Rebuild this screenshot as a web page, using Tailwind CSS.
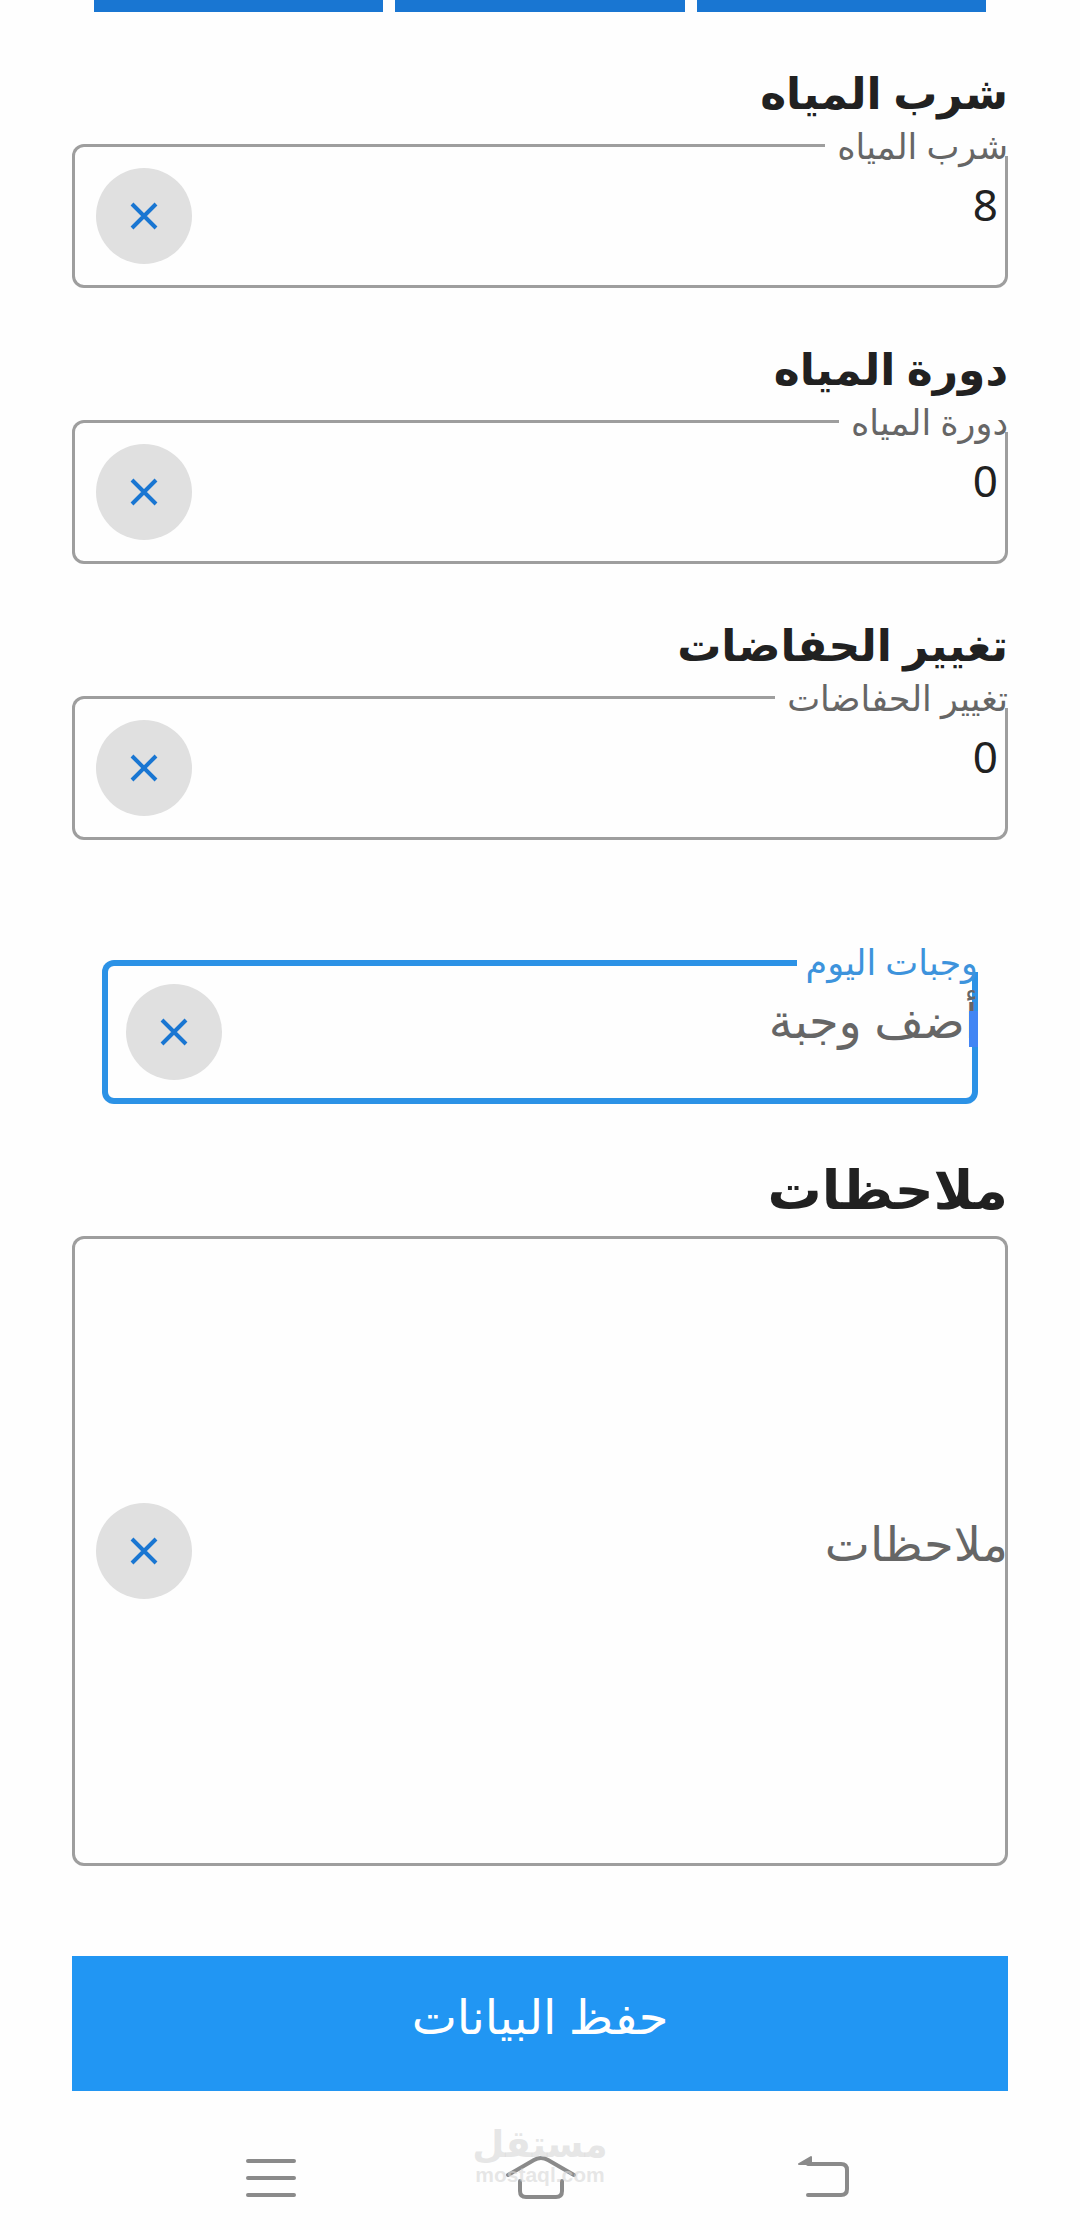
<!DOCTYPE html>
<html lang="ar" dir="rtl">
<head>
    <meta charset="UTF-8">
    <meta name="viewport" content="width=device-width, initial-scale=1.0">
    <title>البيانات اليومية</title>
    <script src="https://cdn.jsdelivr.net/npm/@tailwindcss/browser@4"></script>
</head>
<body class="bg-[#fefefe] text-[#212121] font-['Noto_Sans','DejaVu_Sans',sans-serif]">

    <div class="grid grid-cols-3 gap-3 px-[94px]">
        <div class="h-3 bg-[#1976d2]"></div>
        <div class="h-3 bg-[#1976d2]"></div>
        <div class="h-3 bg-[#1976d2]"></div>
    </div>

    <form id="daily-form" class="px-[72px]">
        <h2 class="pt-11 pb-4 text-[44px] leading-[72px] font-bold">شرب المياه</h2>
        <div class="relative flex h-36 items-center rounded-xl pl-6 pr-[10px] inset-ring-3 inset-ring-[#9e9e9e]">
            <label for="water" class="absolute right-0 -top-3 bg-[#fefefe] pl-3 pt-1 text-[35px] leading-5 text-[#666]">شرب المياه</label>
            <input id="water" type="text" value="8" class="min-w-0 flex-1 pb-6 text-[44px] leading-[60px] outline-none">
            <button type="button" aria-label="مسح" class="clear flex size-24 items-center justify-center rounded-full bg-[#e0e0e0]">
                <svg class="size-7" viewBox="0 0 28 28" fill="none" stroke="#1976d2" stroke-width="4"><path d="M2 2l24 24M26 2L2 26"/></svg>
            </button>
        </div>

        <h2 class="pt-11 pb-4 text-[44px] leading-[72px] font-bold">دورة المياه</h2>
        <div class="relative flex h-36 items-center rounded-xl pl-6 pr-[10px] inset-ring-3 inset-ring-[#9e9e9e]">
            <label for="toilet" class="absolute right-0 -top-3 bg-[#fefefe] pl-3 pt-1 text-[35px] leading-5 text-[#666]">دورة المياه</label>
            <input id="toilet" type="text" value="0" class="min-w-0 flex-1 pb-6 text-[44px] leading-[60px] outline-none">
            <button type="button" aria-label="مسح" class="clear flex size-24 items-center justify-center rounded-full bg-[#e0e0e0]">
                <svg class="size-7" viewBox="0 0 28 28" fill="none" stroke="#1976d2" stroke-width="4"><path d="M2 2l24 24M26 2L2 26"/></svg>
            </button>
        </div>

        <h2 class="pt-11 pb-4 text-[44px] leading-[72px] font-bold">تغيير الحفاضات</h2>
        <div class="relative flex h-36 items-center rounded-xl pl-6 pr-[10px] inset-ring-3 inset-ring-[#9e9e9e]">
            <label for="diapers" class="absolute right-0 -top-3 bg-[#fefefe] pl-3 pt-1 text-[35px] leading-5 text-[#666]">تغيير الحفاضات</label>
            <input id="diapers" type="text" value="0" class="min-w-0 flex-1 pb-6 text-[44px] leading-[60px] outline-none">
            <button type="button" aria-label="مسح" class="clear flex size-24 items-center justify-center rounded-full bg-[#e0e0e0]">
                <svg class="size-7" viewBox="0 0 28 28" fill="none" stroke="#1976d2" stroke-width="4"><path d="M2 2l24 24M26 2L2 26"/></svg>
            </button>
        </div>

        <div class="relative mx-[30px] mt-[120px] flex h-36 items-center rounded-xl pl-6 inset-ring-6 inset-ring-[#2c92e6]">
            <label for="meals" class="absolute right-0 -top-3 bg-[#fefefe] pl-2 pt-1 text-[35px] leading-5 text-[#3d93dc]">وجبات اليوم</label>
            <input id="meals" type="text" placeholder="أضف وجبة" class="min-w-0 flex-1 pb-6 text-[48px] leading-[60px] outline-none placeholder:text-[#666]">
            <span class="absolute right-0 top-[51px] h-9 w-[9px] bg-[#4285f4]"></span>
            <button type="button" aria-label="مسح" class="clear flex size-24 items-center justify-center rounded-full bg-[#e0e0e0]">
                <svg class="size-7" viewBox="0 0 28 28" fill="none" stroke="#1976d2" stroke-width="4"><path d="M2 2l24 24M26 2L2 26"/></svg>
            </button>
        </div>

        <h2 class="pt-12 pb-3 text-[54px] leading-[72px] font-bold"><label for="notes">ملاحظات</label></h2>
        <div class="flex h-[630px] items-center rounded-xl pl-6 inset-ring-3 inset-ring-[#9e9e9e]">
            <textarea id="notes" rows="1" placeholder="ملاحظات" class="min-w-0 flex-1 resize-none overflow-hidden pb-4 text-[48px] leading-[60px] outline-none placeholder:text-[#666]"></textarea>
            <button type="button" aria-label="مسح" class="clear flex size-24 items-center justify-center rounded-full bg-[#e0e0e0]">
                <svg class="size-7" viewBox="0 0 28 28" fill="none" stroke="#1976d2" stroke-width="4"><path d="M2 2l24 24M26 2L2 26"/></svg>
            </button>
        </div>

        <button type="submit" class="mt-[90px] h-[135px] w-full bg-[#2196f3] pb-4 text-[48px] text-white">حفظ البيانات</button>
    </form>

    <nav class="relative grid h-[139px] grid-cols-3 items-center justify-items-center px-[126px] pt-[34px]">
        <button type="button" aria-label="رجوع">
            <svg class="h-12 w-[72px]" viewBox="0 0 72 48" fill="none" stroke="#8a8a8a" stroke-width="4" stroke-linecap="round"><path d="M28 10H61q6 0 6 6V35q0 6-6 6H28"/><path d="M19 10L31 3V10Z" fill="#8a8a8a" stroke-width="2" stroke-linejoin="round"/></svg>
        </button>
        <button type="button" aria-label="الرئيسية">
            <svg class="h-12 w-[72px]" viewBox="0 0 72 48" fill="none" stroke="#8a8a8a" stroke-width="4" stroke-linecap="round"><path d="M4 21L30 6q7-4 14 0L70 21M16 27V37q0 6 6 6H52q6 0 6-6V27"/></svg>
        </button>
        <button type="button" aria-label="القائمة">
            <svg class="h-12 w-[72px]" viewBox="0 0 72 48" fill="none" stroke="#8a8a8a" stroke-width="4" stroke-linecap="round"><path d="M20 7H66M20 24H66M20 41H66"/></svg>
        </button>
        <div class="pointer-events-none absolute inset-x-0 top-8 flex flex-col items-center font-bold text-[#d6d6d6]/60">
            <span class="text-[37px] leading-10">مستقل</span>
            <span class="font-['Liberation_Sans',sans-serif] text-[21px] leading-6">mostaql.com</span>
        </div>
    </nav>

    <script>
        document.querySelectorAll('.clear').forEach((button) => {
            button.addEventListener('click', () => {
                button.parentElement.querySelector('input, textarea').value = '';
            });
        });

        document.getElementById('daily-form').addEventListener('submit', (event) => {
            event.preventDefault();
        });
    </script>
</body>
</html>
